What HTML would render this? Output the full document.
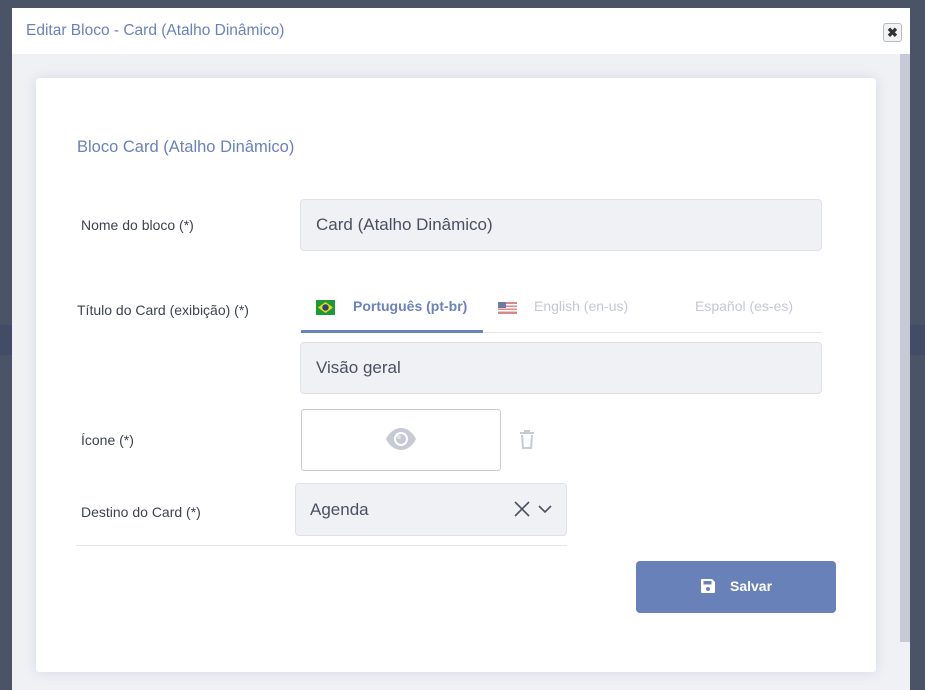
<!DOCTYPE html>
<html><head><meta charset="utf-8"><style>
*{box-sizing:border-box;margin:0;padding:0}
body{width:925px;height:690px;overflow:hidden;background:#4b5366;font-family:"Liberation Sans",sans-serif;position:relative}
.band{position:absolute;left:0;width:925px;top:325px;height:30px;background:#434c66}
.modal{position:absolute;left:12px;top:8px;width:898px;height:682px;background:#eff1f5}
.hdr{position:absolute;left:0;top:0;width:898px;height:46px;background:#fff}
.hdr .t{position:absolute;left:14px;top:14px;font-size:15.5px;color:#6b82b8}
.close{position:absolute;left:871px;top:15px;width:19px;height:19px;border:1px solid #b8bcc5;border-radius:3px;background:#f2f3f5;font-size:13px;font-weight:bold;line-height:17px;text-align:center;color:#333}
.sb{position:absolute;left:888px;top:46px;width:10px;height:588px;background:#c5cad6}
.card{position:absolute;left:24px;top:70px;width:840px;height:594px;background:#fff;border-radius:3px;box-shadow:0 0 12px rgba(150,160,190,.3)}
.abs{position:absolute}
.lbl{font-size:14px;color:#3d4350}
.inp{background:#f0f1f5;border:1px solid #dfe2e8;border-radius:4px;font-size:17px;color:#4a5060;padding-left:15px}
</style></head><body>
<div class="band"></div>
<div class="modal">
 <div class="hdr"><div class="t">Editar Bloco - Card (Atalho Dinâmico)</div><div class="close">✖</div></div>
 <div class="sb"></div>
 <div class="card">
  <div class="abs" style="left:41px;top:60px;font-size:16.5px;color:#6b82b8">Bloco Card (Atalho Dinâmico)</div>
  <div class="abs lbl" style="left:45px;top:139px">Nome do bloco (*)</div>
  <div class="abs inp" style="left:264px;top:121px;width:522px;height:52px;line-height:50px">Card (Atalho Dinâmico)</div>
  <div class="abs lbl" style="left:41px;top:224px">Título do Card (exibição) (*)</div>
  <div class="abs" style="left:264px;top:254px;width:522px;height:1px;background:#e3e6ec"></div>
  <div class="abs" style="left:265px;top:252px;width:182px;height:3px;background:#6b82b8"></div>
  <svg class="abs" style="left:280px;top:222px" width="19" height="15"><rect width="19" height="15" fill="#1a9b3a"/><polygon points="9.5,2 17,7.5 9.5,13 2,7.5" fill="#f5d800"/><circle cx="9.5" cy="7.5" r="3.2" fill="#2a3f8f"/></svg>
  <div class="abs" style="left:317px;top:220px;font-size:14px;font-weight:bold;color:#6b82b8">Português (pt-br)</div>
  <svg class="abs" style="left:462px;top:224px" width="19" height="12"><rect width="19" height="12" fill="#d88"/><rect y="2" width="19" height="1.5" fill="#fff"/><rect y="5" width="19" height="1.5" fill="#fff"/><rect y="8" width="19" height="1.5" fill="#fff"/><rect width="8" height="6" fill="#6a7aa0"/></svg>
  <div class="abs" style="left:498px;top:220px;font-size:14px;color:#c3c8d3">English (en-us)</div>
  <div class="abs" style="left:659px;top:220px;font-size:14px;color:#c3c8d3">Español (es-es)</div>
  <div class="abs inp" style="left:264px;top:264px;width:522px;height:52px;line-height:50px">Visão geral</div>
  <div class="abs lbl" style="left:45px;top:354px">Ícone (*)</div>
  <div class="abs" style="left:265px;top:331px;width:200px;height:62px;border:1px solid #c8ccd6;border-radius:3px"></div>
  <svg class="abs" style="left:349px;top:349px" width="32" height="24" viewBox="0 0 32 24"><path d="M1 12C5 4 11 1 16 1s11 3 15 11c-4 8-10 11-15 11S5 20 1 12z" fill="#c6cad4"/><circle cx="16" cy="12" r="7" fill="#fff"/><circle cx="16" cy="12" r="5" fill="#c6cad4"/><circle cx="14" cy="10" r="2" fill="#fff" opacity=".5"/></svg>
  <svg class="abs" style="left:483px;top:352px" width="16" height="19" viewBox="0 0 16 19"><path d="M1 3h14M6 3V1h4v2M3 5l1 13h8l1-13" fill="none" stroke="#c6cad4" stroke-width="2"/></svg>
  <div class="abs lbl" style="left:45px;top:426px">Destino do Card (*)</div>
  <div class="abs inp" style="left:259px;top:405px;width:272px;height:53px;line-height:51px;padding-left:14px">Agenda</div>
  <svg class="abs" style="left:478px;top:423px" width="16" height="16"><path d="M1 1l14 14M15 1L1 15" stroke="#4a5060" stroke-width="1.6"/></svg>
  <svg class="abs" style="left:502px;top:427px" width="14" height="9"><path d="M1 1l6 6 6-6" stroke="#4a5060" stroke-width="1.6" fill="none"/></svg>
  <div class="abs" style="left:40px;top:467px;width:491px;height:1px;background:#e6e8ed"></div>
  <div class="abs" style="left:600px;top:483px;width:200px;height:52px;background:#6881b9;border-radius:4px;color:#fff;font-size:14px;font-weight:bold">
   <svg class="abs" style="left:64px;top:17px" width="16" height="16" viewBox="0 0 16 16"><path d="M1 2a1 1 0 0 1 1-1h10l3 3v10a1 1 0 0 1-1 1H2a1 1 0 0 1-1-1z" fill="#fff"/><rect x="3.5" y="3" width="8" height="3.5" fill="#6881b9"/><circle cx="8" cy="11" r="2" fill="#6881b9"/></svg>
   <span class="abs" style="left:94px;top:17px">Salvar</span>
  </div>
 </div>
</div>
</body></html>
